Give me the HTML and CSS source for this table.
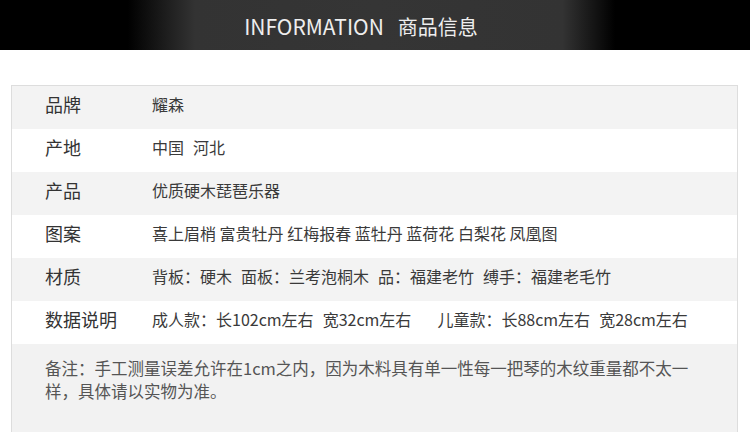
FILE: index.html
```html
<!DOCTYPE html>
<html lang="zh-CN">
<head>
<meta charset="utf-8">
<title>INFORMATION 商品信息</title>
<link rel="stylesheet" href="styles.css">
</head>
<body>
<header class="banner">
  <h1 class="banner-title">INFORMATION<span class="banner-cn">商品信息</span></h1>
</header>
<section class="info">
  <div class="row alt"><div class="label">品牌</div><div class="value">耀森</div></div>
  <div class="row"><div class="label">产地</div><div class="value parts"><span>中国</span><span>河北</span></div></div>
  <div class="row alt"><div class="label">产品</div><div class="value">优质硬木琵琶乐器</div></div>
  <div class="row"><div class="label">图案</div><div class="value">喜上眉梢 富贵牡丹 红梅报春 蓝牡丹 蓝荷花 白梨花 凤凰图</div></div>
  <div class="row alt"><div class="label">材质</div><div class="value parts"><span>背板：硬木</span><span>面板：兰考泡桐木</span><span>品：福建老竹</span><span>缚手：福建老毛竹</span></div></div>
  <div class="row"><div class="label">数据说明</div><div class="value parts"><span>成人款：长102cm左右</span><span>宽32cm左右</span><span class="wide">儿童款：长88cm左右</span><span>宽28cm左右</span></div></div>
  <div class="note">备注：手工测量误差允许在1cm之内，因为木料具有单一性每一把琴的木纹重量都不太一样，具体请以实物为准。</div>
</section>
</body>
</html>
```

FILE: styles.css
```css
html, body {
  margin: 0;
  padding: 0;
  background: #ffffff;
}
body {
  font-family: "Noto Sans CJK SC", "Noto Sans", sans-serif;
  color: #333333;
  width: 750px;
  height: 432px;
  overflow: hidden;
}
.banner {
  height: 50px;
  background: linear-gradient(to right, #000000 0%, #000000 17%, #333333 26%, #353535 50%, #333333 75%, #000000 82%, #000000 100%);
  display: flex;
  align-items: center;
  justify-content: center;
}
.banner-title {
  margin: 0;
  font-weight: 400;
  font-size: 21px;
  line-height: 1;
  color: #eeeeee;
  letter-spacing: 0;
  padding: 2px 28px 0 0;
}
.banner-cn {
  margin-left: 14px;
  font-size: 20px;
}
.info {
  margin: 35px 12px 0 11px;
  border: 1px solid #dddddd;
  border-bottom: none;
}
.row {
  display: grid;
  grid-template-columns: 140px 1fr;
  box-sizing: border-box;
  height: 43px;
  padding-bottom: 7px;
  align-items: center;
  background: #ffffff;
}
.row.alt {
  background: #f3f3f3;
}
.label {
  padding-left: 33px;
  font-size: 18px;
  color: #333333;
}
.value {
  font-size: 16px;
  color: #3a3a3a;
  white-space: nowrap;
}
.parts {
  display: flex;
  gap: 9px;
}
.parts .wide {
  margin-left: 17px;
}
.note {
  background: #f2f2f2;
  padding: 13px 38px 29px 33px;
  font-size: 16.5px;
  line-height: 23px;
  color: #555555;
}
```
